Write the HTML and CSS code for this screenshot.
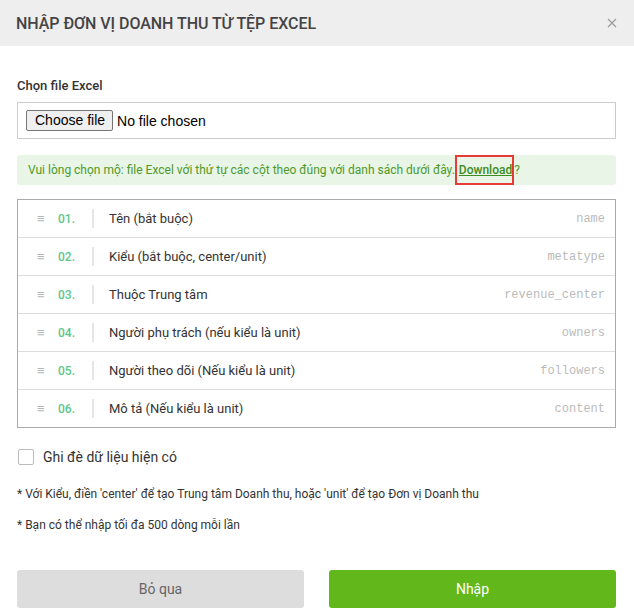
FILE: index.html
```html
<!DOCTYPE html>
<html lang="vi">
<head>
<meta charset="utf-8">
<link rel="stylesheet" href="styles.css">
</head>
<body>
<div class="modal">
  <div class="header">
    <h1 class="title">NHẬP ĐƠN VỊ DOANH THU TỪ TỆP EXCEL</h1>
    <span class="close">
      <svg width="10" height="10" viewBox="0 0 10 10"><path d="M1 1L9 9M9 1L1 9" stroke="#9e9e9e" stroke-width="1.3"/></svg>
    </span>
  </div>
  <div class="body">
    <div class="label">Chọn file Excel</div>
    <div class="file-box">
      <span class="file-btn">Choose file</span><span class="file-text">No file chosen</span>
    </div>
    <div class="alert">Vui lòng chọn mộ: file Excel với thứ tự các cột theo đúng với danh sách dưới đây.<span class="mark"><a class="dl">Download</a></span>?</div>
    <ul class="cols">
      <li class="row"><span class="drag">≡</span><span class="num">01.</span><span class="sep"></span><span class="name">Tên (bắt buộc)</span><span class="key">name</span></li>
      <li class="row"><span class="drag">≡</span><span class="num">02.</span><span class="sep"></span><span class="name">Kiểu (bắt buộc, center/unit)</span><span class="key">metatype</span></li>
      <li class="row"><span class="drag">≡</span><span class="num">03.</span><span class="sep"></span><span class="name">Thuộc Trung tâm</span><span class="key">revenue_center</span></li>
      <li class="row"><span class="drag">≡</span><span class="num">04.</span><span class="sep"></span><span class="name">Người phụ trách (nếu kiểu là unit)</span><span class="key">owners</span></li>
      <li class="row"><span class="drag">≡</span><span class="num">05.</span><span class="sep"></span><span class="name">Người theo dõi (Nếu kiểu là unit)</span><span class="key">followers</span></li>
      <li class="row"><span class="drag">≡</span><span class="num">06.</span><span class="sep"></span><span class="name">Mô tả (Nếu kiểu là unit)</span><span class="key">content</span></li>
    </ul>
    <label class="check"><span class="box"></span><span>Ghi đè dữ liệu hiện có</span></label>
    <p class="note">* Với Kiểu, điền 'center' để tạo Trung tâm Doanh thu, hoặc 'unit' để tạo Đơn vị Doanh thu</p>
    <p class="note">* Bạn có thể nhập tối đa 500 dòng mỗi lần</p>
    <div class="actions">
      <button class="btn btn-cancel">Bỏ qua</button>
      <button class="btn btn-ok">Nhập</button>
    </div>
  </div>
</div>
</body>
</html>
```
FILE: styles.css
```css
* { box-sizing: border-box; }
html, body { margin: 0; padding: 0; background: #fff; }
body { font-family: Roboto, "Noto Sans", sans-serif; color: #333; width: 634px; height: 616px; overflow: hidden; }
.modal { width: 634px; }
.header { height: 46px; background: #eeeeee; display: flex; align-items: center; justify-content: space-between; padding: 0 17px 0 16px; }
.title { margin: 0; font-size: 16px; font-weight: 500; color: #444; letter-spacing: -0.05px; }
.close { display: flex; align-items: center; }
.body { padding: 31px 18px 0 17px; }
.label { font-size: 13px; font-weight: 500; color: #333; line-height: 18px; margin-bottom: 7px; }
.file-box { height: 37px; border: 1px solid #ccc; display: flex; align-items: center; padding-left: 8px; font-family: "Liberation Sans", Arial, sans-serif; font-size: 14px; color: #000; }
.file-btn { display: inline-block; height: 21px; line-height: 19px; padding: 0 7px 0 8px; border: 1px solid #767676; border-radius: 2px; background: #efefef; margin-right: 4px; }
.alert { margin-top: 16px; height: 30px; background: #e9f5e6; border-radius: 3px; color: #4d9a2c; font-size: 12px; display: flex; align-items: center; padding-left: 11px; }
.mark { border: 2px solid #e53a35; height: 30px; display: inline-flex; align-items: center; padding: 0 0 0 2px; margin-left: 0; }
.dl { color: #3e8b1e; text-decoration: underline; font-weight: 500; }
.cols { list-style: none; margin: 14px 0 0; padding: 0; border: 1px solid #aaa; }
.row { height: 38px; display: flex; align-items: center; border-top: 1px solid #ddd; padding: 0 10px 0 19px; }
.row:first-child { border-top: none; height: 37px; }
.drag { color: #b5b5b5; font-size: 13px; width: 21px; }
.num { color: #5cc789; font-size: 12px; font-weight: 500; width: 34px; }
.sep { width: 2px; height: 19px; background: #e6e6e6; margin-right: 15px; }
.name { font-size: 13px; color: #333; flex: 1; }
.key { font-family: "Liberation Mono", monospace; font-size: 12px; color: #bbb; }
.check { display: flex; align-items: center; margin-top: 21px; font-size: 14px; color: #333; }
.box { width: 16px; height: 16px; border: 1px solid #bbb; border-radius: 2px; margin: 0 9px 0 1px; }
.note { font-size: 12px; margin: 22px 0 0; line-height: 15px; color: #333; }
.note + .note { margin-top: 16px; }
.actions { display: flex; gap: 25px; margin-top: 37px; }
.btn { flex: 1; height: 38px; border: none; border-radius: 3px; font-family: Roboto, sans-serif; font-size: 14px; }
.btn-cancel { background: #dddddd; color: #666; }
.btn-ok { background: #62b81a; color: #fff; }
```
